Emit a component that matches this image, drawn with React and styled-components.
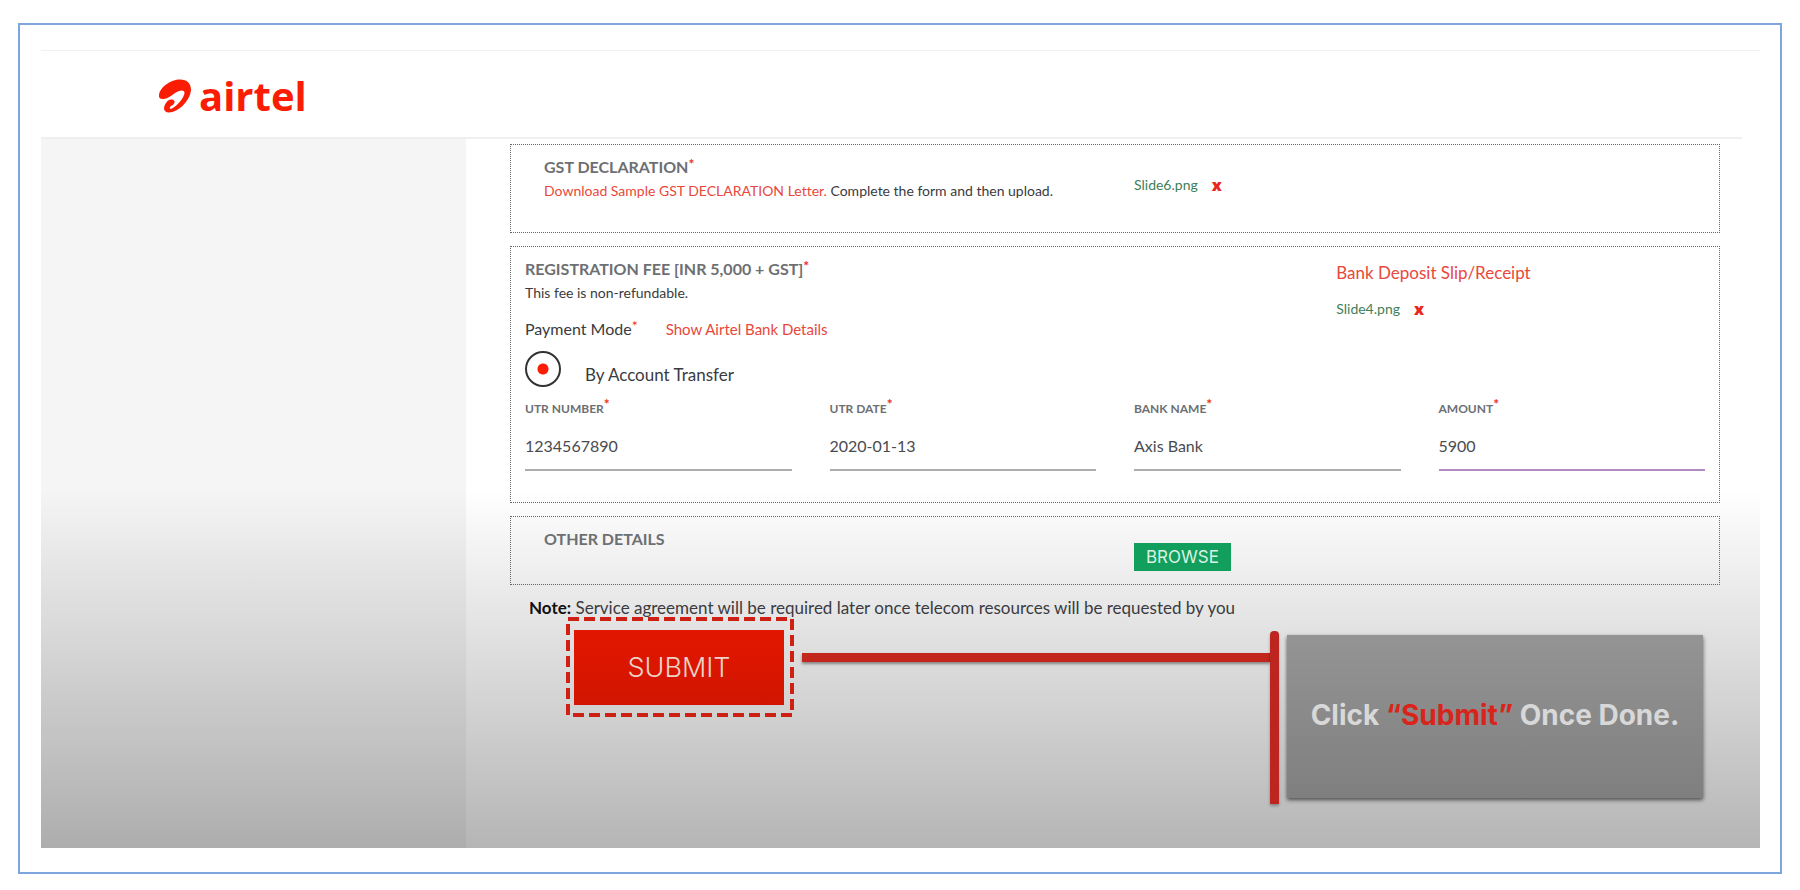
import React, { useState } from 'react';
import styled, { createGlobalStyle } from 'styled-components';

const GlobalStyle = createGlobalStyle`
    * {
        box-sizing: border-box;
    }

    body {
        margin: 0;
        background-color: #fff;
        color: #3a3b40;
        font-family: Lato, 'Liberation Sans', sans-serif;
        font-size: 16px;
        font-variant-ligatures: none;
        line-height: 24px;
    }
`;

const Page = styled.div`
    min-height: 100vh;
    padding: 23px 18px 16px;
    display: flex;
`;

const Frame = styled.div`
    flex: 1;
    display: flex;
    padding: 25px 20px 24px 21px;
    border: 2px solid #7fa6dc;
`;

const Screen = styled.div`
    flex: 1;
    display: flex;
    flex-direction: column;
    border-top: 1px solid #f1f1f1;
    background: linear-gradient(rgba(0, 0, 0, 0) 55%, rgba(0, 0, 0, 0.29) 100%);
`;

const Header = styled.header`
    height: 88px;
    margin-right: 18px;
    padding: 4px 118px 0;
    border-bottom: 2px solid #efefef;
    display: flex;
    align-items: center;
`;

const Brand = styled.a`
    display: flex;
    align-items: center;
    gap: 8px;
    color: #fb1c04;
    font-family: 'Open Sans', 'Noto Sans', sans-serif;
    font-size: 40px;
    font-weight: 700;
    line-height: 48px;
    text-decoration: none;
`;

const Body = styled.div`
    flex: 1;
    display: grid;
    grid-template-columns: 425px minmax(0, 1fr);
`;

const Sidebar = styled.aside`
    background-color: rgba(0, 0, 0, 0.04);
`;

const Content = styled.main`
    padding: 5px 40px 20px 44px;
`;

const Form = styled.form`
    display: flex;
    flex-direction: column;
    gap: 13px;
`;

const Panel = styled.section`
    padding: 10px 14px ${(props) => props.$bottom}px;
    border: 1px dotted #666;
`;

const Halves = styled.div`
    display: grid;
    grid-template-columns: 1fr 1fr;
    column-gap: 38px;
`;

const FeeTop = styled.div`
    display: grid;
    grid-template-columns: 11fr 5fr;
`;

const Indented = styled.div`
    padding-left: 19px;
`;

const Side = styled.div`
    padding-top: ${(props) => props.$top}px;
`;

const Title = styled.h2`
    margin: 0;
    color: #6d6f73;
    font-size: 16px;
    font-weight: 700;
    line-height: 24px;
`;

const Required = styled.span`
    color: #e8301c;
    font-size: 14px;
    line-height: 0;
    vertical-align: 4px;
`;

const Hint = styled.p`
    margin: 0;
    font-size: 14px;
    line-height: 24px;
`;

const Link = styled.a`
    color: #e8483a;
    font-size: ${(props) => props.$size || 14}px;
    text-decoration: none;
`;

const PaymentMode = styled.div`
    margin-top: 12px;
    display: flex;
    gap: 28px;
`;

const UploadedFile = styled.div`
    margin-top: ${(props) => props.$gap || 0}px;
    display: flex;
    align-items: center;
    gap: 14px;
    color: #3f8058;
    font-size: 14px;
    line-height: 24px;
`;

const RemoveButton = styled.button`
    padding: 0;
    border: 0;
    background: none;
    color: #e8281c;
    font-family: 'Open Sans', sans-serif;
    font-size: 16px;
    font-weight: 800;
    line-height: 20px;
    cursor: pointer;
`;

const RadioLabel = styled.label`
    margin-top: 10px;
    display: flex;
    align-items: flex-end;
    gap: 24px;
    font-size: 17px;
`;

const Radio = styled.input`
    width: 36px;
    height: 36px;
    margin: 0;
    appearance: none;
    border: 2px solid #333;
    border-radius: 50%;
    background: #fff;

    &:checked {
        background: radial-gradient(circle, #fb1c04 5px, #fff 6px);
    }
`;

const Fields = styled.div`
    margin-top: 12px;
    display: grid;
    grid-template-columns: repeat(4, 1fr);
    column-gap: 38px;
`;

const Label = styled.label`
    display: block;
    color: #6d6f73;
    font-size: 12px;
    font-weight: 700;
    line-height: 20px;
`;

const TextInput = styled.input`
    display: block;
    width: 100%;
    height: 52px;
    padding: 14px 0 12px;
    border: 0;
    border-bottom: 2px solid ${(props) => (props.$active ? '#b28abf' : '#adadad')};
    outline: 0;
    background: none;
    color: #4a4b50;
    font-family: inherit;
    font-size: 16px;
    line-height: 24px;
`;

const BrowseButton = styled.button`
    display: block;
    height: 28px;
    padding: 0 12px;
    border: 0;
    background-color: #129e5c;
    color: #d9f3e5;
    font-family: Inter, sans-serif;
    font-size: 17px;
    line-height: 28px;
    cursor: pointer;
`;

const Note = styled.p`
    margin: 0;
    padding-left: 19px;
    font-size: 17px;
    line-height: 19px;

    b {
        color: #111;
    }
`;

const SubmitRow = styled.div`
    padding: 0 17px 0 56px;
    display: flex;
    align-items: flex-start;
`;

const Highlight = styled.div`
    position: relative;
    width: 228px;
    padding: 13px 10px 12px 8px;
`;

const Dashes = styled.svg`
    position: absolute;
    inset: 0;
    width: 100%;
    height: 100%;
    overflow: visible;
    pointer-events: none;
`;

const SubmitButton = styled.button`
    display: block;
    width: 100%;
    height: 75px;
    border: 0;
    background: linear-gradient(#e31600, #d11500);
    color: #ecd3c8;
    font-family: Inter, sans-serif;
    font-size: 27px;
    font-weight: 300;
    cursor: pointer;
`;

const Connector = styled.div`
    flex: 1;
    height: 9px;
    margin: 36px 0 0 8px;
    background-color: #c2261c;
    box-shadow: 0 2px 3px rgba(0, 0, 0, 0.4);
`;

const Post = styled.div`
    width: 9px;
    height: 173px;
    margin-top: 14px;
    border-radius: 4px 4px 0 0;
    background-color: #bd2620;
    box-shadow: 0 2px 3px rgba(0, 0, 0, 0.3);
`;

const Callout = styled.div`
    width: 416px;
    height: 163px;
    margin: 18px 0 0 8px;
    padding-bottom: 4px;
    display: flex;
    align-items: center;
    justify-content: center;
    background: linear-gradient(#949494, #7f7f7f);
    box-shadow: 0 2px 4px rgba(0, 0, 0, 0.6);
    color: #d8d8d8;
    font-family: Inter, sans-serif;
    font-size: 28px;
    font-weight: 700;
    line-height: 32px;
    white-space: pre;
`;

const Accent = styled.span`
    color: #d8241a;
`;

const FIELDS = [
    { id: 'utr-number', label: 'UTR NUMBER', value: '1234567890' },
    { id: 'utr-date', label: 'UTR DATE', value: '2020-01-13' },
    { id: 'bank-name', label: 'BANK NAME', value: 'Axis Bank' },
    { id: 'amount', label: 'AMOUNT', value: '5900', active: true },
];

const Swoosh = () => (
    <svg width="32" height="34" viewBox="0 0 32 34" fill="currentColor" aria-hidden="true">
        <path d="M0 16C1 8 12 0.500 21 0.500C28 0.500 32 4.500 32 11C31 22 19 33.500 10 33.500C5 33.500 4 29.500 6 25.500C8 21.500 11.500 19.500 14.500 21C17 23 15 25.500 12 27C10 28.500 10.500 30.500 13 29.500C18 27 25 19 25.500 14C25.500 10.500 20.500 11 16 14C11.500 17 9 19.500 5 20C2 20.500 -0.500 19.500 0 16Z" />
    </svg>
);

const File = ({ name, gap }) => (
    <UploadedFile $gap={gap}>
        {name}
        <RemoveButton type="button" aria-label={`Remove ${name}`}>
            x
        </RemoveButton>
    </UploadedFile>
);

const Field = ({ id, label, value, active }) => {
    const [text, setText] = useState(value);

    return (
        <div>
            <Label htmlFor={id}>
                {label}
                <Required>*</Required>
            </Label>
            <TextInput id={id} value={text} $active={active} onChange={(e) => setText(e.target.value)} />
        </div>
    );
};

const App = () => (
    <Page>
        <GlobalStyle />
        <Frame>
            <Screen>
                <Header>
                    <Brand href="#">
                        <Swoosh />
                        airtel
                    </Brand>
                </Header>
                <Body>
                    <Sidebar />
                    <Content>
                        <Form onSubmit={(e) => e.preventDefault()}>
                            <Panel $bottom={29}>
                                <Halves>
                                    <Indented>
                                        <Title>
                                            GST DECLARATION<Required>*</Required>
                                        </Title>
                                        <Hint>
                                            <Link href="#">Download Sample GST DECLARATION Letter.</Link> Complete the
                                            form and then upload.
                                        </Hint>
                                    </Indented>
                                    <Side $top={18}>
                                        <File name="Slide6.png" />
                                    </Side>
                                </Halves>
                            </Panel>
                            <Panel $bottom={31}>
                                <FeeTop>
                                    <div>
                                        <Title>
                                            REGISTRATION FEE [INR 5,000 + GST]<Required>*</Required>
                                        </Title>
                                        <Hint>This fee is non-refundable.</Hint>
                                        <PaymentMode>
                                            <span>
                                                Payment Mode<Required>*</Required>
                                            </span>
                                            <Link href="#" $size={15}>
                                                Show Airtel Bank Details
                                            </Link>
                                        </PaymentMode>
                                    </div>
                                    <Side $top={4}>
                                        <Link href="#" $size={17}>
                                            Bank Deposit Slip/Receipt
                                        </Link>
                                        <File name="Slide4.png" gap={12} />
                                    </Side>
                                </FeeTop>
                                <RadioLabel>
                                    <Radio type="radio" name="mode" defaultChecked />
                                    By Account Transfer
                                </RadioLabel>
                                <Fields>
                                    {FIELDS.map((field) => (
                                        <Field key={field.id} {...field} />
                                    ))}
                                </Fields>
                            </Panel>
                            <Panel $bottom={13}>
                                <Halves>
                                    <Indented>
                                        <Title>OTHER DETAILS</Title>
                                    </Indented>
                                    <Side $top={16}>
                                        <BrowseButton type="button">BROWSE</BrowseButton>
                                    </Side>
                                </Halves>
                            </Panel>
                            <div>
                                <Note>
                                    <b>Note:</b> Service agreement will be required later once telecom resources will be
                                    requested by you
                                </Note>
                                <SubmitRow>
                                    <Highlight>
                                        <SubmitButton type="submit">SUBMIT</SubmitButton>
                                        <Dashes viewBox="0 0 228 100" aria-hidden="true">
                                            <rect
                                                x="2"
                                                y="2"
                                                width="224"
                                                height="96"
                                                fill="none"
                                                stroke="#cf2015"
                                                strokeWidth="4"
                                                strokeDasharray="11 5"
                                            />
                                        </Dashes>
                                    </Highlight>
                                    <Connector />
                                    <Post />
                                    <Callout>
                                        Click <Accent>“Submit”</Accent> Once Done.
                                    </Callout>
                                </SubmitRow>
                            </div>
                        </Form>
                    </Content>
                </Body>
            </Screen>
        </Frame>
    </Page>
);

export default App;
